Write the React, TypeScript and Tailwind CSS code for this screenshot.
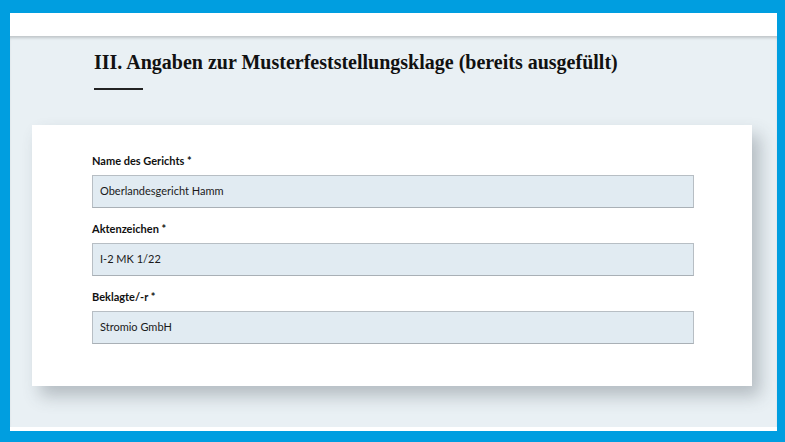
import React from 'react';

const fields = [
  { label: 'Name des Gerichts *', value: 'Oberlandesgericht Hamm' },
  { label: 'Aktenzeichen *', value: 'I-2 MK 1/22' },
  { label: 'Beklagte/-r *', value: 'Stromio GmbH' },
];

export default function App() {
  return (
    <div className="w-[785px] h-[442px] bg-[#009ee0] pt-[13px] pl-[10px] pr-[8px] pb-[11px]">
      <div className="h-full flex flex-col bg-white">
        <div className="h-[23px] bg-white shrink-0" />
        <div className="flex-1 bg-[#e9f0f4] shadow-[inset_0_3px_3px_-1px_rgba(0,0,0,0.18)] flex flex-col mb-[4px]">
          <div className="pl-[84px] pt-[13px]">
            <h2
              className="text-[20px] leading-[26px] font-semibold text-[#111]"
              style={{ fontFamily: '"Liberation Serif", "DejaVu Serif", serif' }}
            >
              III. Angaben zur Musterfeststellungsklage (bereits ausgefüllt)
            </h2>
            <div className="w-[49px] h-[2px] bg-[#222] mt-[13px]" />
          </div>
          <div
            className="ml-[22px] mt-[35px] w-[720px] h-[261px] bg-white shadow-[8px_10px_16px_rgba(60,70,80,0.3)] px-[60px] pt-[29px]"
            style={{ fontFamily: 'Lato, "Open Sans", sans-serif' }}
          >
            <div className="flex flex-col gap-[14px]">
              {fields.map((f) => (
                <div key={f.label} className="flex flex-col">
                  <label className="text-[11px] font-bold text-[#111] leading-[14px] mb-[7px]">{f.label}</label>
                  <div className="w-[602px] h-[33px] bg-[#e1ebf2] border border-[#b7bec4] border-b-[#a9b0b6] flex items-center px-[7px] text-[11px] text-[#1a1a1a]">
                    {f.value}
                  </div>
                </div>
              ))}
            </div>
          </div>
        </div>
      </div>
    </div>
  );
}
